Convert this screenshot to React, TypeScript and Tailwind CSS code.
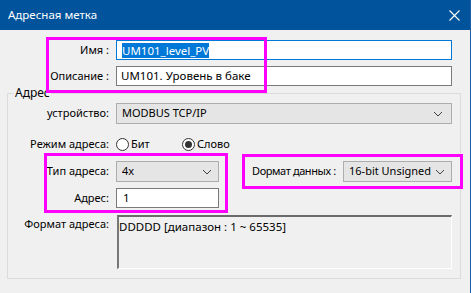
import React from "react";

const Chevron = () => (
  <svg width="10" height="6" viewBox="0 0 10 6" className="shrink-0">
    <polyline points="1,1 5,5 9,1" fill="none" stroke="#404040" strokeWidth="1" />
  </svg>
);

const Select = ({ value, className }: { value: string; className: string }) => (
  <div
    className={`flex shrink-0 items-center justify-between whitespace-nowrap border border-[#adadad] bg-[#e5e5e5] pl-[5px] pr-[6px] text-[11px] ${className}`}
  >
    <span>{value}</span>
    <Chevron />
  </div>
);

const Radio = ({ checked, label }: { checked?: boolean; label: string }) => (
  <div className="flex items-center gap-[2px]">
    <div className="flex h-[13px] w-[13px] items-center justify-center rounded-full border border-[#333] bg-white">
      {checked && <div className="h-[7px] w-[7px] rounded-full bg-[#333]" />}
    </div>
    <span className="text-[11px]">{label}</span>
  </div>
);

const lbl = "shrink-0 whitespace-nowrap text-right text-[11px]";

export default function App() {
  return (
    <div
      className="relative h-[293px] w-[471px] overflow-hidden border-r border-[#1d5fa5] bg-[#f0f0f0] text-[11.5px] text-black"
      style={{ fontFamily: '"Noto Sans", "Open Sans", sans-serif' }}
    >
      {/* title bar */}
      <div className="flex h-[30px] items-center justify-between bg-[#01539b] pl-[8px] pr-[10px] text-white">
        <span className="text-[11.5px]">Адресная метка</span>
        <svg width="11" height="11" viewBox="0 0 11 11">
          <path d="M0.5 0.5 L10.5 10.5 M10.5 0.5 L0.5 10.5" stroke="white" strokeWidth="1.1" />
        </svg>
      </div>

      <div className="flex flex-col pt-[10px]">
        <div className="flex h-[20px] items-center">
          <div className={`w-[109px] ${lbl}`}>Имя :</div>
          <div className="ml-[7px] flex h-[20px] w-[336px] items-center border border-[#0078d7] bg-white pl-[5px]">
            <span className="bg-[#0078d7] leading-[15px] text-white">UM101_level_PV</span>
          </div>
        </div>
        <div className="mt-[6px] flex h-[20px] items-center">
          <div className={`w-[109px] ${lbl}`}>Описание :</div>
          <div className="ml-[7px] flex h-[20px] w-[336px] items-center border border-[#7a7a7a] bg-white pl-[4px]">
            UM101. Уровень в баке
          </div>
        </div>

        <fieldset className="ml-[7px] w-[454px] border border-[#dcdcdc] pb-[9px] pr-[8px]">
          <legend className="ml-[6px] px-[1px] text-[12px] leading-[14px]">Адрес</legend>

          <div className="mt-[3px] flex items-center">
            <div className={`w-[101px] ${lbl}`}>устройство:</div>
            <Select value="MODBUS TCP/IP" className="ml-[7px] h-[21px] w-[336px] pr-[8px]" />
          </div>

          <div className="mt-[10px] flex h-[20px] items-center">
            <div className={`w-[101px] ${lbl}`}>Режим адреса:</div>
            <div className="ml-[7px] flex w-[150px] items-center">
              <div className="w-[66px]">
                <Radio label="Бит" />
              </div>
              <Radio checked label="Слово" />
            </div>
          </div>

          <div className="mt-[7px] flex h-[21px] items-center">
            <div className={`w-[101px] ${lbl}`}>Тип адреса:</div>
            <Select value="4x" className="ml-[7px] h-[21px] w-[103px]" />
            <div className="ml-[33px] w-[91px] shrink-0 whitespace-nowrap text-[11px] tracking-[-0.4px]">
              Dормат данных :
            </div>
            <Select value="16-bit Unsigned" className="h-[21px] w-[109px]" />
          </div>

          <div className="mt-[6px] flex h-[20px] items-center">
            <div className={`w-[101px] ${lbl}`}>Адрес:</div>
            <div className="ml-[7px] flex h-[20px] w-[103px] items-center border border-[#7a7a7a] bg-white pl-[6px]">
              1
            </div>
          </div>

          <div className="mt-[7px] flex">
            <div className={`w-[101px] pt-[1px] ${lbl}`}>Формат адреса:</div>
            <div className="ml-[8px] h-[54px] w-[335px] border-b border-l-2 border-r border-t-2 border-b-white border-l-[#777] border-r-white border-t-[#6a6a6a] bg-[#f0f0f0] pt-[2px] leading-[16px]">
              DDDDD [диапазон : 1 ~ 65535]
            </div>
          </div>
        </fieldset>
      </div>

      {/* annotation boxes */}
      <div className="pointer-events-none absolute left-[46px] top-[37px] h-[56px] w-[221px] border-[3px] border-[#ff00ff]" />
      <div className="pointer-events-none absolute left-[44px] top-[153px] h-[60px] w-[184px] border-[3px] border-[#ff00ff]" />
      <div className="pointer-events-none absolute left-[242px] top-[154px] h-[35px] w-[221px] border-[3px] border-[#ff00ff]" />
    </div>
  );
}
